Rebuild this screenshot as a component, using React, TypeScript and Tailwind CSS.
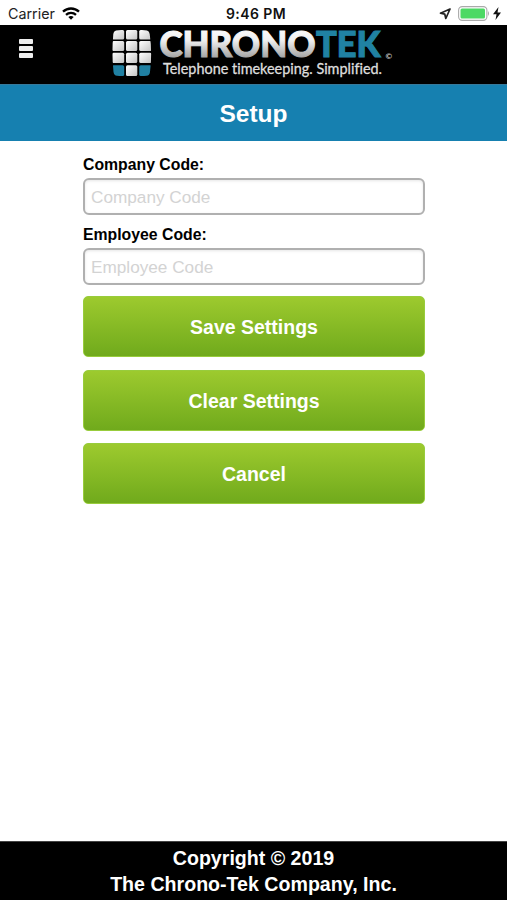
const TILE_ROWS = [
  { y: 1, h: 9.5 },
  { y: 12, h: 10 },
  { y: 23.7, h: 10.3 },
  { y: 36.3, h: 10.7 },
];

function KeypadLogo() {
  return (
    <svg width="282" height="56" viewBox="0 0 282 56" className="block" role="img" aria-label="Chronotek">
      <defs>
        <linearGradient id="silver" x1="0" y1="0.1" x2="0" y2="0.85">
          <stop offset="0" stopColor="#ffffff" />
          <stop offset="0.45" stopColor="#f0f0f0" />
          <stop offset="1" stopColor="#a0a0a0" />
        </linearGradient>
        <linearGradient id="tile" x1="0" y1="0" x2="1" y2="1">
          <stop offset="0" stopColor="#ffffff" />
          <stop offset="1" stopColor="#c4c4c4" />
        </linearGradient>
        <clipPath id="barrel">
          <path d="M4 1.5Q20 -0.5 35 1.5Q37.500 2 37.700 5Q40.500 24 38 43Q37.700 46.500 34.500 46.800Q20 48.500 5 46.800Q2 46.500 1.500 43Q-0.500 24 1.300 5Q1.500 2 4 1.500Z" />
        </clipPath>
      </defs>
      <g transform="translate(0 3)" clipPath="url(#barrel)">
        {TILE_ROWS.map((r, i) => (
          <g key={r.y}>
            <rect x="0" y={r.y} width="12.2" height={r.h} rx="1.5" fill={i === 3 ? "#2080a2" : "url(#tile)"} />
            <rect x="14" y={r.y} width="11.3" height={r.h} rx="1.5" fill="url(#tile)" />
            <rect x="27.200" y={r.y} width="12.500" height={r.h} rx="1.5" fill={i === 3 ? "#2080a2" : "url(#tile)"} />
          </g>
        ))}
      </g>
      <g fontFamily="Lato, sans-serif">
        <text x="47.500" y="31" fontSize="36" fontWeight="900" textLength="156" lengthAdjust="spacingAndGlyphs" fill="url(#silver)" stroke="url(#silver)" strokeWidth="1.100">CHRONO</text>
        <text x="204" y="31" fontSize="36" fontWeight="900" textLength="64.500" lengthAdjust="spacingAndGlyphs" fill="#2082a3" stroke="#2082a3" strokeWidth="1.100">TEK</text>
        <text x="51" y="48" fontSize="14.500" textLength="219" lengthAdjust="spacingAndGlyphs" fill="#dedede" stroke="#dedede" strokeWidth="0.3" style={{ fontVariantLigatures: "none" }}>Telephone timekeeping. Simplified.</text>
        <text x="273.500" y="33" fontSize="8" fontWeight="700" fill="#c4c4c4">©</text>
      </g>
    </svg>
  );
}

function StatusBar() {
  return (
    <div className="relative flex h-[25px] items-center justify-between bg-white pt-[2px] pr-[6px] pl-2 text-[#222]">
      <div className="flex items-center gap-[7px] font-[Inter,sans-serif] text-[14.300px]">
        <span className="w-[47px] whitespace-nowrap">Carrier</span>
        <svg width="18" height="13" viewBox="0 0 18 13" fill="none" stroke="#000" strokeWidth="2.300">
          <path d="M1 4.700C5.500 .4 12.500 .4 17 4.700" />
          <path d="M4 7.900C6.800 5.300 11.200 5.300 14 7.900" />
          <path d="M6.300 9.900Q9 7.900 11.700 9.900L9 12.700Z" fill="#000" stroke="none" />
        </svg>
      </div>
      <div className="absolute inset-x-0 top-[2px] flex h-[23px] items-center justify-center pl-[5px] font-[Inter,sans-serif] text-[14px] font-semibold tracking-[0.4px] text-[#111]">9:46 PM</div>
      <div className="flex items-center">
        <svg width="12" height="12" viewBox="0 0 12 12" fill="none" stroke="#222" strokeWidth="1.700" strokeLinejoin="round">
          <path d="M11 1L1.500 5.200L5.800 6.200L6.800 10.500Z" />
        </svg>
        <svg className="ml-[7px]" width="32" height="15" viewBox="0 0 32 15">
          <rect x=".6" y=".6" width="28.300" height="13.800" rx="3.600" fill="#fff" stroke="#aaa" strokeWidth="1.100" />
          <rect x="2.500" y="2.500" width="24.500" height="10" rx="1.500" fill="#4cd964" />
          <path d="M30 5Q32 7.500 30 10Z" fill="#aaa" />
        </svg>
        <svg className="ml-[3px]" width="8" height="13" viewBox="0 0 8 13">
          <path d="M5.500 0L0 7.200H3.500L2.500 13L8 5.500H4.500Z" fill="#111" />
        </svg>
      </div>
    </div>
  );
}

function Field({ label, placeholder, id }: { label: string; placeholder: string; id: string }) {
  return (
    <div className="h-[70px]">
      <label htmlFor={id} className="block h-[27px] pt-px text-[15.800px] leading-[27px] font-bold text-black">{label}</label>
      <input
        id={id}
        placeholder={placeholder}
        className="mt-px block h-[37px] w-full rounded-[6px] border-2 border-[#b0b0b0] bg-white px-[6px] pt-[3px] pb-px text-[17.200px] shadow-[inset_0_1px_3px_rgba(0,0,0,0.1)] outline-none placeholder:text-[#d3d3d3]"
      />
    </div>
  );
}

function GreenButton({ children }: { children: string }) {
  return (
    <button className="h-[61px] w-full rounded-[5px] border border-[#98cc3c] bg-linear-to-b from-[#9dca2e] to-[#70aa1c] pt-[3px] text-[19.500px] font-bold text-white">
      {children}
    </button>
  );
}

export default function App() {
  return (
    <div className="flex h-[900px] w-[507px] flex-col overflow-hidden bg-white font-['Liberation_Sans',Arial,sans-serif]">
      <StatusBar />
      <header className="flex h-[59px] items-start bg-black">
        <button aria-label="Menu" className="mt-[14px] ml-[19px] flex w-[14px] flex-col gap-[2px]">
          <span className="h-[5px] rounded-[1px] bg-[#eee]" />
          <span className="h-[5px] rounded-[1px] bg-[#eee]" />
          <span className="h-[5px] rounded-[1px] bg-[#eee]" />
        </button>
        <div className="mt-px ml-[79px]">
          <KeypadLogo />
        </div>
      </header>
      <h1 className="flex h-[57px] items-center justify-center border-t border-[#36799b] bg-[#1680b0] pt-[2px] text-[24.500px] font-bold text-white">
        Setup
      </h1>
      <main className="flex-1 pr-[82px] pl-[83px] pt-[9px]">
        <Field id="company" label="Company Code:" placeholder="Company Code" />
        <Field id="employee" label="Employee Code:" placeholder="Employee Code" />
        <div className="mt-[6px] flex flex-col gap-[12.500px]">
          <GreenButton>Save Settings</GreenButton>
          <GreenButton>Clear Settings</GreenButton>
          <GreenButton>Cancel</GreenButton>
        </div>
      </main>
      <footer className="h-[59px] border-t border-[#444] bg-black pt-[3px] text-center text-[19.600px] leading-[26px] font-bold text-white">
        <p>Copyright © 2019</p>
        <p>The Chrono-Tek Company, Inc.</p>
      </footer>
    </div>
  );
}
